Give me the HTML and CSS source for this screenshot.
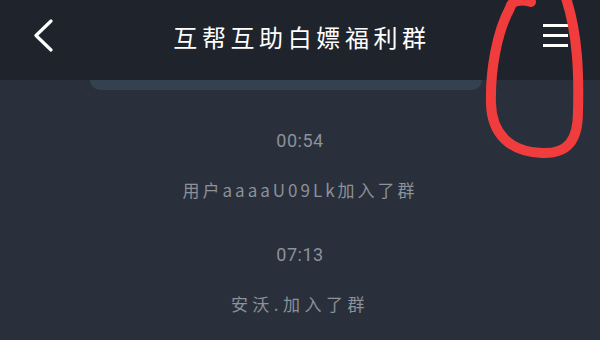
FILE: index.html
```html
<!DOCTYPE html>
<html lang="zh">
<head>
<meta charset="utf-8">
<link rel="stylesheet" href="styles.css">
</head>
<body>
<div class="screen">
  <header class="topbar">
    <svg class="back" width="22" height="36" viewBox="0 0 22 36"><path d="M18 2 L3 16.5 L18 31" fill="none" stroke="#ffffff" stroke-width="3.2" stroke-linecap="round" stroke-linejoin="round"/></svg>
    <h1 class="title">互帮互助白嫖福利群</h1>
    <div class="menu"><span></span><span></span><span></span></div>
  </header>
  <div class="pinned"></div>
  <main class="feed">
    <div class="group">
      <div class="time">00:54</div>
      <div class="msg">用户aaaaU09Lk加入了群</div>
    </div>
    <div class="group">
      <div class="time">07:13</div>
      <div class="msg wide">安沃.加入了群</div>
    </div>
  </main>
  <svg class="mark" width="600" height="340" viewBox="0 0 600 340">
    <path d="M531 2 C520 -1 511 1 510 8 C497 32 490 70 491 104 C492 134 510 152 542 153 C568 154 578 140 578 112 C579 75 578 35 566 -2" fill="none" stroke="#f03c3c" stroke-width="10" stroke-linecap="round" stroke-linejoin="round"/>
  </svg>
</div>
</body>
</html>
```

FILE: styles.css
```css
html, body {
  margin: 0;
  padding: 0;
}
body {
  width: 600px;
  height: 340px;
  overflow: hidden;
  background: #29303b;
  font-family: "Noto Sans CJK SC", "Noto Sans", sans-serif;
}
.screen {
  position: relative;
  width: 600px;
  height: 340px;
  background: #29303b;
}
.topbar {
  height: 80px;
  background: #1f242c;
  display: flex;
  align-items: center;
  justify-content: space-between;
  padding: 0 32px 0 33px;
  box-sizing: border-box;
}
.back {
  display: block;
  margin-top: -6px;
}
.title {
  margin: 0 0 6px 6px;
  color: #ffffff;
  font-size: 24px;
  font-weight: 400;
  letter-spacing: 4.6px;
  line-height: 30px;
}
.menu {
  display: flex;
  flex-direction: column;
  gap: 7px;
  width: 25px;
  margin-top: -10px;
}
.menu span {
  display: block;
  height: 3px;
  background: #ffffff;
}
.pinned {
  margin-left: 90px;
  width: 392px;
  height: 10px;
  background: #334150;
  border-radius: 0 0 10px 10px;
}
.feed {
  display: flex;
  flex-direction: column;
  align-items: center;
  gap: 41px;
  padding-top: 39px;
}
.group {
  display: flex;
  flex-direction: column;
  align-items: center;
  gap: 25px;
}
.time, .msg {
  color: #8c919a;
  font-size: 17px;
  line-height: 24px;
}
.time {
  font-family: "Roboto", "Noto Sans", sans-serif;
  font-size: 18px;
  letter-spacing: 0.5px;
}
.msg {
  letter-spacing: 3px;
}
.msg.wide {
  letter-spacing: 4.5px;
}
.mark {
  position: absolute;
  left: 0;
  top: 0;
  pointer-events: none;
}
```
